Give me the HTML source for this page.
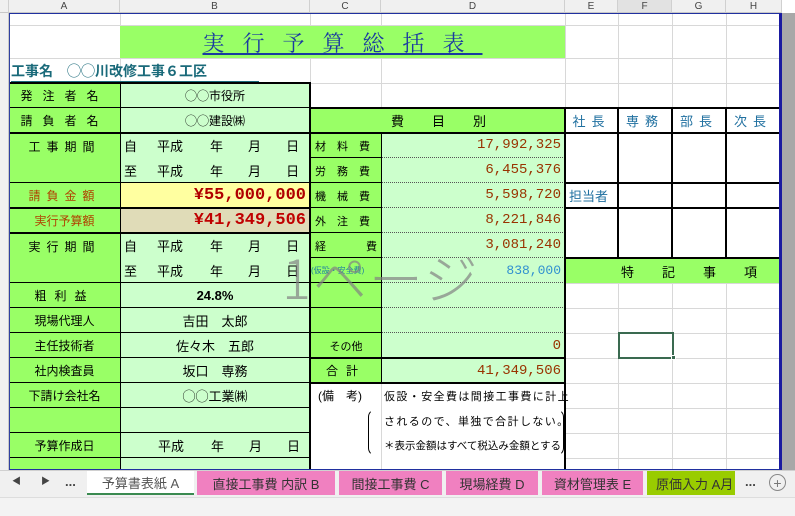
<!DOCTYPE html><html><head><meta charset="utf-8"><style>
*{margin:0;padding:0;box-sizing:border-box}
body{width:795px;height:516px;overflow:hidden;background:#fff;position:relative;font-family:"Liberation Sans","Noto Sans CJK JP",sans-serif;font-size:12px;color:#000}
.a{position:absolute;display:flex;align-items:center;white-space:nowrap}
.c{justify-content:center}.r{justify-content:flex-end;padding-right:4px}
.g{background:#99ff66}.l{background:#ccffcc}
.gl{position:absolute;background:#d8d8d8}
.hd{position:absolute;top:0;height:13px;background:#f0f0f0;border-right:1px solid #d0d0d0;border-bottom:1px solid #c8c8c8;font-size:10px;color:#444;text-align:center;line-height:13px}
.num{font-family:"Liberation Mono","Noto Sans CJK JP",monospace;color:#993300;font-size:14px}
.bk{position:absolute;background:#000}
.j{font-family:"Noto Sans CJK JP",sans-serif}
.tab{position:absolute;top:471px;height:24px;display:flex;align-items:center;justify-content:center;font-size:13px;color:#333;background:#f080c0}
</style></head><body>
<div class="hd" style="left:0;width:9px"></div>
<div class="hd" style="left:9px;width:111px">A</div>
<div class="hd" style="left:120px;width:190px">B</div>
<div class="hd" style="left:310px;width:71px">C</div>
<div class="hd" style="left:381px;width:184px">D</div>
<div class="hd" style="left:565px;width:53px">E</div>
<div class="hd" style="left:618px;width:54px;background:#e2e2e2">F</div>
<div class="hd" style="left:672px;width:54px">G</div>
<div class="hd" style="left:726px;width:56px">H</div>
<div style="position:absolute;left:0;top:13px;width:9px;height:457px;background:#f0f0f0;border-right:1px solid #c8c8c8"></div>
<div class="gl" style="left:9px;top:25px;width:773px;height:1px"></div>
<div class="gl" style="left:9px;top:58px;width:773px;height:1px"></div>
<div class="gl" style="left:9px;top:83px;width:773px;height:1px"></div>
<div class="gl" style="left:565px;top:283px;width:217px;height:1px"></div>
<div class="gl" style="left:565px;top:308px;width:217px;height:1px"></div>
<div class="gl" style="left:565px;top:333px;width:217px;height:1px"></div>
<div class="gl" style="left:565px;top:358px;width:217px;height:1px"></div>
<div class="gl" style="left:565px;top:383px;width:217px;height:1px"></div>
<div class="gl" style="left:565px;top:408px;width:217px;height:1px"></div>
<div class="gl" style="left:565px;top:433px;width:217px;height:1px"></div>
<div class="gl" style="left:565px;top:458px;width:217px;height:1px"></div>
<div class="gl" style="left:120px;top:13px;width:1px;height:70px"></div>
<div class="gl" style="left:310px;top:13px;width:1px;height:95px"></div>
<div class="gl" style="left:381px;top:13px;width:1px;height:95px"></div>
<div class="gl" style="left:565px;top:13px;width:1px;height:95px"></div>
<div class="gl" style="left:618px;top:13px;width:1px;height:95px"></div>
<div class="gl" style="left:672px;top:13px;width:1px;height:95px"></div>
<div class="gl" style="left:726px;top:13px;width:1px;height:95px"></div>
<div class="gl" style="left:618px;top:283px;width:1px;height:187px"></div>
<div class="gl" style="left:672px;top:283px;width:1px;height:187px"></div>
<div class="gl" style="left:726px;top:283px;width:1px;height:187px"></div>
<div class="gl" style="left:381px;top:383px;width:1px;height:87px"></div>
<div class="a c g" style="left:120px;top:26px;width:445px;height:32px;font-family:'Liberation Serif','Noto Serif CJK SC',serif;font-size:22px;color:#1a3aa0;letter-spacing:18px;text-decoration:underline">実行予算総括表</div>
<div class="a" style="left:11px;top:60px;height:22px;width:248px;color:#1a6a7a;font-weight:bold;font-size:14px;border-bottom:1px solid #1a6a7a">工事名　 <span class="j">◯◯</span>川改修工事６工区</div>
<div class="a c g" style="left:9px;top:83px;width:111px;height:25px;letter-spacing:10px">発注者名</div>
<div class="a c l" style="left:120px;top:83px;width:190px;height:25px"><span class="j">◯◯</span>市役所</div>
<div class="a c g" style="left:9px;top:108px;width:111px;height:25px;letter-spacing:10px">請負者名</div>
<div class="a c l" style="left:120px;top:108px;width:190px;height:25px"><span class="j">◯◯</span>建設㈱</div>
<div class="a c g" style="left:9px;top:133px;width:111px;height:50px;align-items:flex-start;padding-top:5px;letter-spacing:6px">工事期間</div>
<div class="a l" style="left:120px;top:133px;width:190px;height:25px;padding-left:4px;font-size:13px">自<span style="margin-left:20px">平成</span><span style="margin-left:27px">年</span><span style="margin-left:25px">月</span><span style="margin-left:25px">日</span></div>
<div class="a l" style="left:120px;top:158px;width:190px;height:25px;padding-left:4px;font-size:13px">至<span style="margin-left:20px">平成</span><span style="margin-left:27px">年</span><span style="margin-left:25px">月</span><span style="margin-left:25px">日</span></div>
<div class="a c g" style="left:9px;top:183px;width:111px;height:25px;color:#b04000;letter-spacing:6px">請負金額</div>
<div class="a r" style="left:120px;top:183px;width:190px;height:25px;background:#ffffa0;color:#b00000;font-weight:bold;font-size:17px;font-family:'Liberation Mono',monospace">¥55,000,000</div>
<div class="a c g" style="left:9px;top:208px;width:111px;height:25px;color:#b04000">実行予算額</div>
<div class="a r" style="left:120px;top:208px;width:190px;height:25px;background:#e0dcb8;color:#c00000;font-weight:bold;font-size:17px;font-family:'Liberation Mono',monospace">¥41,349,506</div>
<div class="a c g" style="left:9px;top:233px;width:111px;height:50px;align-items:flex-start;padding-top:5px;letter-spacing:6px">実行期間</div>
<div class="a l" style="left:120px;top:233px;width:190px;height:25px;padding-left:4px;font-size:13px">自<span style="margin-left:20px">平成</span><span style="margin-left:27px">年</span><span style="margin-left:25px">月</span><span style="margin-left:25px">日</span></div>
<div class="a l" style="left:120px;top:258px;width:190px;height:25px;padding-left:4px;font-size:13px">至<span style="margin-left:20px">平成</span><span style="margin-left:27px">年</span><span style="margin-left:25px">月</span><span style="margin-left:25px">日</span></div>
<div class="a c g" style="left:9px;top:283px;width:111px;height:25px;letter-spacing:8px">粗利益</div>
<div class="a c l" style="left:120px;top:283px;width:190px;height:25px;font-weight:bold;font-size:13px">24.8%</div>
<div class="a c g" style="left:9px;top:308px;width:111px;height:25px">現場代理人</div>
<div class="a c l" style="left:120px;top:308px;width:190px;height:25px;font-size:13px">吉田　太郎</div>
<div class="a c g" style="left:9px;top:333px;width:111px;height:25px">主任技術者</div>
<div class="a c l" style="left:120px;top:333px;width:190px;height:25px;font-size:13px">佐々木　五郎</div>
<div class="a c g" style="left:9px;top:358px;width:111px;height:25px">社内検査員</div>
<div class="a c l" style="left:120px;top:358px;width:190px;height:25px;font-size:13px">坂口　専務</div>
<div class="a c g" style="left:9px;top:383px;width:111px;height:25px">下請け会社名</div>
<div class="a c l" style="left:120px;top:383px;width:190px;height:25px;font-size:13px"><span class="j">◯◯</span>工業㈱</div>
<div class="a c g" style="left:9px;top:408px;width:111px;height:25px"></div>
<div class="a c l" style="left:120px;top:408px;width:190px;height:25px"></div>
<div class="a c g" style="left:9px;top:433px;width:111px;height:25px">予算作成日</div>
<div class="a l" style="left:120px;top:433px;width:190px;height:25px;padding-left:38px;font-size:13px">平成<span style="margin-left:27px">年</span><span style="margin-left:25px">月</span><span style="margin-left:25px">日</span></div>
<div class="a g" style="left:9px;top:458px;width:111px;height:12px"></div>
<div class="a l" style="left:120px;top:458px;width:190px;height:12px"></div>
<div class="bk" style="left:9px;top:82px;width:302px;height:2px"></div>
<div class="bk" style="left:9px;top:132px;width:302px;height:2px"></div>
<div class="bk" style="left:9px;top:182px;width:302px;height:1px"></div>
<div class="bk" style="left:9px;top:207px;width:302px;height:2px"></div>
<div class="bk" style="left:9px;top:232px;width:302px;height:2px"></div>
<div class="bk" style="left:9px;top:282px;width:302px;height:1px"></div>
<div class="bk" style="left:9px;top:307px;width:302px;height:1px"></div>
<div class="bk" style="left:9px;top:332px;width:302px;height:1px"></div>
<div class="bk" style="left:9px;top:357px;width:302px;height:1px"></div>
<div class="bk" style="left:9px;top:382px;width:302px;height:1px"></div>
<div class="bk" style="left:9px;top:407px;width:302px;height:1px"></div>
<div class="bk" style="left:9px;top:432px;width:302px;height:1px"></div>
<div class="bk" style="left:9px;top:457px;width:302px;height:1px"></div>
<div class="bk" style="left:9px;top:107px;width:302px;height:1px"></div>
<div class="bk" style="left:120px;top:83px;width:1px;height:387px"></div>
<div class="bk" style="left:309px;top:83px;width:2px;height:387px"></div>
<div class="a g" style="left:311px;top:108px;width:254px;height:25px;padding-left:80px;font-size:13px">費<span style="margin-left:28px">目</span><span style="margin-left:28px">別</span></div>
<div class="a g" style="left:311px;top:133px;width:70px;height:25px;padding-left:4px;font-size:11px;letter-spacing:11px">材料費</div>
<div class="a g" style="left:311px;top:158px;width:70px;height:25px;padding-left:4px;font-size:11px;letter-spacing:11px">労務費</div>
<div class="a g" style="left:311px;top:183px;width:70px;height:25px;padding-left:4px;font-size:11px;letter-spacing:11px">機械費</div>
<div class="a g" style="left:311px;top:208px;width:70px;height:25px;padding-left:4px;font-size:11px;letter-spacing:11px">外注費</div>
<div class="a g" style="left:311px;top:233px;width:70px;height:25px;padding-left:4px;font-size:11px">経<span style="margin-left:40px">費</span></div>
<div class="a g" style="left:311px;top:258px;width:70px;height:25px;font-size:8px;color:#2080a0">(仮設・安全費)</div>
<div class="a g" style="left:311px;top:283px;width:70px;height:25px"></div>
<div class="a g" style="left:311px;top:308px;width:70px;height:25px"></div>
<div class="a c g" style="left:311px;top:333px;width:70px;height:25px;font-size:11px">その他</div>
<div class="a c g" style="left:311px;top:358px;width:70px;height:25px;letter-spacing:8px">合計</div>
<div class="a r l num" style="left:381px;top:133px;width:184px;height:25px;border-bottom:1px dotted #555">17,992,325</div>
<div class="a r l num" style="left:381px;top:158px;width:184px;height:25px;border-bottom:1px dotted #555">6,455,376</div>
<div class="a r l num" style="left:381px;top:183px;width:184px;height:25px;border-bottom:1px dotted #555">5,598,720</div>
<div class="a r l num" style="left:381px;top:208px;width:184px;height:25px;border-bottom:1px dotted #555">8,221,846</div>
<div class="a r l num" style="left:381px;top:233px;width:184px;height:25px;border-bottom:1px dotted #555">3,081,240</div>
<div class="a r l num" style="left:381px;top:258px;width:184px;height:25px;border-bottom:1px dotted #555;color:#3090d0;font-size:13px">838,000</div>
<div class="a r l num" style="left:381px;top:283px;width:184px;height:25px;border-bottom:1px dotted #555"></div>
<div class="a r l num" style="left:381px;top:308px;width:184px;height:25px;border-bottom:1px dotted #555"></div>
<div class="a r l num" style="left:381px;top:333px;width:184px;height:25px">0</div>
<div class="a r l num" style="left:381px;top:358px;width:184px;height:25px">41,349,506</div>
<div class="a" style="left:318px;top:383px;height:25px;font-size:12px">(備　考)</div>
<div class="a" style="left:384px;top:383px;height:25px;font-size:11px;letter-spacing:1.4px">仮設・安全費は間接工事費に計上</div>
<div class="a" style="left:384px;top:408px;height:25px;font-size:11px;letter-spacing:1.4px">されるので、単独で合計しない。</div>
<div class="a" style="left:384px;top:433px;height:25px;font-size:10.5px">＊表示金額はすべて税込み金額とする</div>
<div style="position:absolute;left:368px;top:409px;width:196px;height:47px;border:1px solid #000;border-radius:8px;border-top-color:transparent;border-bottom-color:transparent"></div>
<div class="bk" style="left:311px;top:107px;width:254px;height:2px"></div>
<div class="bk" style="left:311px;top:132px;width:254px;height:2px"></div>
<div class="bk" style="left:381px;top:133px;width:1px;height:250px"></div>
<div class="bk" style="left:311px;top:157px;width:70px;height:1px"></div>
<div class="bk" style="left:311px;top:182px;width:70px;height:1px"></div>
<div class="bk" style="left:311px;top:207px;width:70px;height:1px"></div>
<div class="bk" style="left:311px;top:232px;width:70px;height:1px"></div>
<div class="bk" style="left:311px;top:257px;width:70px;height:1px"></div>
<div class="bk" style="left:311px;top:282px;width:70px;height:1px"></div>
<div class="bk" style="left:311px;top:307px;width:70px;height:1px"></div>
<div class="bk" style="left:311px;top:332px;width:70px;height:1px"></div>
<div class="bk" style="left:311px;top:357px;width:254px;height:2px"></div>
<div class="bk" style="left:311px;top:382px;width:254px;height:2px"></div>
<div class="bk" style="left:564px;top:108px;width:2px;height:362px"></div>
<div class="a c" style="left:565px;top:108px;width:53px;height:25px;color:#2070a0;font-size:13px;letter-spacing:6px">社長</div>
<div class="a c" style="left:618px;top:108px;width:54px;height:25px;color:#2070a0;font-size:13px;letter-spacing:6px">専務</div>
<div class="a c" style="left:672px;top:108px;width:54px;height:25px;color:#2070a0;font-size:13px;letter-spacing:6px">部長</div>
<div class="a c" style="left:726px;top:108px;width:54px;height:25px;color:#2070a0;font-size:13px;letter-spacing:6px">次長</div>
<div class="a" style="left:569px;top:183px;height:25px;color:#2070a0;font-size:13px">担当者</div>
<div class="bk" style="left:565px;top:107px;width:215px;height:2px"></div>
<div class="bk" style="left:565px;top:132px;width:215px;height:2px"></div>
<div class="bk" style="left:565px;top:182px;width:215px;height:2px"></div>
<div class="bk" style="left:565px;top:207px;width:215px;height:2px"></div>
<div class="bk" style="left:565px;top:257px;width:215px;height:2px"></div>
<div class="bk" style="left:617px;top:108px;width:2px;height:150px"></div>
<div class="bk" style="left:671px;top:108px;width:2px;height:150px"></div>
<div class="bk" style="left:725px;top:108px;width:2px;height:150px"></div>
<div class="a g" style="left:566px;top:259px;width:214px;height:24px;padding-left:55px;font-size:13px">特<span style="margin-left:28px">記</span><span style="margin-left:28px">事</span><span style="margin-left:28px">項</span></div>
<div style="position:absolute;left:618px;top:332px;width:56px;height:27px;border:2px solid #3a6a50"></div>
<div style="position:absolute;left:671px;top:355px;width:5px;height:5px;background:#3a6a50;border:1px solid #fff"></div>
<div style="position:absolute;left:9px;top:13px;width:773px;height:457px;border:1px solid #2030a0;border-right:3px solid #1a1aa0;border-left-color:#3040a0"></div>
<div style="position:absolute;left:782px;top:13px;width:13px;height:457px;background:#a8a8a8"></div>
<div class="a" style="left:282px;top:236px;font-size:54px;color:rgba(130,130,130,0.7);font-family:'Noto Sans CJK JP',sans-serif;font-weight:300;letter-spacing:2px">1ページ</div>
<div style="position:absolute;left:0;top:470px;width:795px;height:27px;background:#f0f0f0;border-top:1px solid #d0d0d0"></div>
<div class="a" style="left:12px;top:474px;font-size:9px;color:#444">◀</div>
<div class="a" style="left:41px;top:474px;font-size:9px;color:#444">▶</div>
<div class="a" style="left:65px;top:474px;font-size:13px;color:#444;font-weight:bold">...</div>
<div class="tab" style="left:87px;width:107px;background:#fff;border-bottom:2px solid #3a8a50;color:#555">予算書表紙 A</div>
<div class="tab" style="left:197px;width:138px">直接工事費 内訳 B</div>
<div class="tab" style="left:339px;width:103px">間接工事費 C</div>
<div class="tab" style="left:446px;width:92px">現場経費 D</div>
<div class="tab" style="left:542px;width:101px">資材管理表 E</div>
<div class="tab" style="left:647px;width:88px;background:#99cc00;justify-content:flex-start;padding-left:9px;overflow:hidden">原価入力 A月</div>
<div class="a" style="left:745px;top:474px;font-size:13px;color:#444;font-weight:bold">...</div>
<div class="a c" style="left:769px;top:474px;width:17px;height:17px;border:1px solid #888;border-radius:50%;color:#777;font-size:14px">+</div>
<div style="position:absolute;left:0;top:497px;width:795px;height:19px;background:#f3f3f3;border-top:1px solid #ddd"></div>
</body></html>
